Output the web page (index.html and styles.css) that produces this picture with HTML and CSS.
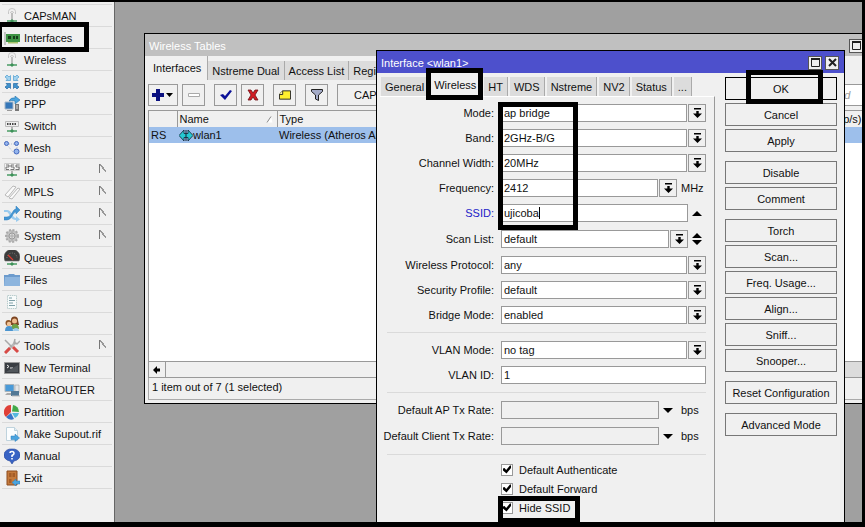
FILE: index.html
```html
<!DOCTYPE html>
<html lang="en">
<head>
<meta charset="utf-8">
<title>Wireless Tables</title>
<link rel="stylesheet" href="styles.css">
</head>
<body>
<svg class="defs" aria-hidden="true">
  <symbol id="drop" viewBox="0 0 9 10"><path d="M1 0h7v1.5H1zM3.300 3h2.400v2.500H9L4.500 10 0 5.500h3.300z"/></symbol>
  <symbol id="antenna" viewBox="0 0 16 16"><g fill="none" stroke="#bbb" stroke-width=".8"><path d="M4.500 6V3.500a3.500 3 0 0 1 7 0V6M6.500 5a1.500 1.500 0 0 1 3 0"/></g><path d="M7.500 5h1v7h-1z" fill="#888"/><path d="M3 13h10" stroke="#4a9c64" stroke-width="1.500"/><path d="M6 13l2-2 2 2-2 2z" fill="#3d9158"/></symbol>
  <symbol id="max" viewBox="0 0 9 9"><path d="M.5 1h8v7.500h-8zM0 1h9" fill="none" stroke="#222"/><path d="M0 0h9v2H0z" fill="#222"/></symbol>
</svg>
<main class="desktop">
  <nav class="menu">
    <a href="#"><svg viewBox="0 0 16 16"><use href="#antenna"/></svg>CAPsMAN</a>
    <a href="#" class="marked"><svg viewBox="0 0 16 16"><path d="M1 2v13" stroke="#999"/><path d="M2 4h14v8H2z" fill="#3f9445"/><path d="M4 6h3v3H4zM9 6h2v3H9zM12 6h2v3h-2z" fill="#163d1a"/><path d="M4 12h10v1.500H4z" fill="#a8c46b"/></svg>Interfaces</a>
    <a href="#"><svg viewBox="0 0 16 16"><use href="#antenna"/></svg>Wireless</a>
    <a href="#"><svg viewBox="0 0 16 16"><g fill="#a3d3f0" stroke="#4c9cce" stroke-width=".7"><path d="M1 3l2-2 2 2 1.500-1.500v5H2L3.500 5z"/><path d="M15 3l-2-2-2 2-1.500-1.500v5H14L12.500 5z"/></g><g fill="#3f91cc" stroke="#2469a3" stroke-width=".7"><path d="M1 13l2 2 2-2 1.500 1.500v-5H2L3.500 11z"/><path d="M15 13l-2 2-2-2-1.500 1.500v-5H14L12.500 11z"/></g></svg>Bridge</a>
    <a href="#"><svg viewBox="0 0 16 16"><path d="M1 6h8v7H1z" fill="#3577b9" stroke="#a5b7c8"/><path d="M3 14h5v1H3z" fill="#999"/><path d="M11 8h4v7h-4z" fill="#777"/><path d="M12 10h2M12 12h2" stroke="#ddd"/><path d="M5 5q2-4 6-3V0l5 4-5 4V5q-4-1-6 0z" fill="#4aa4df" stroke="#2872aa" stroke-width=".6"/></svg>PPP</a>
    <a href="#"><svg viewBox="0 0 16 16"><path d="M1.500 3.500h13v5h-13z" fill="#eee" stroke="#bbb"/><path d="M3 6h10" stroke="#444" stroke-width="2" stroke-dasharray="1.500 1"/><path d="M8 9v4" stroke="#777"/><path d="M3 13h10" stroke="#4a9c64" stroke-width="1.500"/><path d="M6 13l2-2 2 2-2 2z" fill="#3d9158"/></svg>Switch</a>
    <a href="#"><svg viewBox="0 0 16 16"><path d="M5 4h6M13 7v4M9 12L4 6" stroke="#b7bfd0" stroke-dasharray="1 1"/><g fill="#93b4ec" stroke="#4266bd"><circle cx="2.500" cy="3.500" r="2"/><circle cx="12.500" cy="3.500" r="2"/><circle cx="12.500" cy="11.500" r="2.500"/></g></svg>Mesh</a>
    <a href="#" class="more"><svg viewBox="0 0 16 16"><path d="M.5 1.500h15v7H.5z" fill="#f4f4f4" stroke="#ccc"/><path d="M2 3h3v2H2v2.500h3M10 3H7v2h3v2.500H6.500M15 3h-3v2h3v2.500h-3.500" fill="none" stroke="#555" stroke-width=".8"/><path d="M8 9v4" stroke="#777"/><path d="M3 13h10" stroke="#4a9c64" stroke-width="1.500"/><path d="M6 13l2-2 2 2-2 2z" fill="#3d9158"/></svg>IP</a>
    <a href="#" class="more"><svg viewBox="0 0 16 16"><g fill="#fafafa" stroke="#b9b9b9"><path d="M1 11L9 2l3 1-8 10z"/><path d="M5 14l9-10 2 1-8 10z"/></g></svg>MPLS</a>
    <a href="#" class="more"><svg viewBox="0 0 16 16"><path d="M0 4h3q3 0 5 4t4 4v-2l4 3.500-4 2.500v-2q-4 0-6-4T3 6H0z" fill="#9acbee"/><path d="M0 11h3q3 0 5-4t4-4V0l4 4-4 4V6q-2 0-4 4t-5 4H0z" fill="#4496d3" stroke="#2d7fbd" stroke-width=".5"/></svg>Routing</a>
    <a href="#" class="more"><svg viewBox="0 0 16 16"><circle cx="8" cy="8" r="6" fill="#c3c3c3" stroke="#aaa" stroke-width="2" stroke-dasharray="2 1.500"/><circle cx="8" cy="8" r="3" fill="#ddd" stroke="#999"/><path d="M8 3v10M3 8h10" stroke="#aaa"/></svg>System</a>
    <a href="#"><svg viewBox="0 0 16 16"><path d="M1 11a8 8 0 1 1 14 0z" fill="#3c3c3c" stroke="#777" stroke-width=".6"/><path d="M3 8a5 5 0 0 1 10 0" fill="none" stroke="#888" stroke-dasharray="1 1.500"/><path d="M4 5l5 5" stroke="#dc3b31" stroke-width="1.300"/><path d="M3 14h10" stroke="#4a9c64" stroke-width="1.500"/><path d="M6 14l2-2 2 2-2 2z" fill="#3d9158"/></svg>Queues</a>
    <a href="#"><svg viewBox="0 0 16 16"><path d="M0 3h4l1-1h5l1 1h5v11H0z" fill="#6c9bcd"/><path d="M1 5h15v9H0z" fill="#8db5de"/></svg>Files</a>
    <a href="#"><svg viewBox="0 0 16 16"><path d="M3.500 1.500h9v13h-9z" fill="#f8fbfb" stroke="#b8cccc" stroke-dasharray="1.500 .7"/><path d="M5 4h3M5 6.500h6M5 9h4M5 11.500h6" stroke="#7fa0a8"/></svg>Log</a>
    <a href="#"><svg viewBox="0 0 16 16"><path d="M7 4a3.500 3.500 0 0 1 7 0l1 5H7z" fill="#7b4320"/><circle cx="10.500" cy="5" r="2.500" fill="#efbd8f"/><path d="M7 13q0-5 4-5t4 5z" fill="#6da346"/><circle cx="4.500" cy="7" r="3" fill="#8e5629"/><circle cx="5" cy="8" r="2.200" fill="#f2c497"/><path d="M1 15q0-5 4-5t4 5z" fill="#4a94cf"/><path d="M9 15q0-3 3-3t3 3z" fill="#9fcdec"/></svg>Radius</a>
    <a href="#" class="more"><svg viewBox="0 0 16 16"><path d="M2 14L12 4" stroke="#b9b9b9" stroke-width="2.500"/><path d="M11 1l-1 4 3 1 3-3M1 2l7 7" fill="none" stroke="#a9a9a9" stroke-width="1.500"/><path d="M1 15l5-5M9 9l5 5" stroke="#d84a46" stroke-width="3"/></svg>Tools</a>
    <a href="#"><svg viewBox="0 0 16 16"><path d="M.5 2.500h15v11H.5z" fill="#393d42" stroke="#999"/><path d="M3 5l2 1.500L3 8M6 8h3" fill="none" stroke="#eee"/><path d="M2 12L14 5v7z" fill="#51565b"/></svg>New Terminal</a>
    <a href="#"><svg viewBox="0 0 16 16"><path d="M1 2.500h9v7H1z" fill="#4a9ad8" stroke="#a9b4bd"/><path d="M3 11h6v2H1z" fill="#aaa"/><path d="M11 3h4v8h-4z" fill="#e4e6e8" stroke="#aaa" stroke-width=".7"/><path d="M7 9h8v5H7z" fill="#527895"/><path d="M8 14h8" stroke="#bbb"/></svg>MetaROUTER</a>
    <a href="#"><svg viewBox="0 0 16 16"><path d="M7 8V1a7 7 0 0 0-5 12z" fill="#df4038"/><path d="M8 7.500L9 1a7 7 0 0 1 6 7z" fill="#43aa4a"/><path d="M8 9h7a7 7 0 0 1-4 5z" fill="#57b8df"/><path d="M7 9l3 6a7 7 0 0 1-8-2z" fill="#3976c8"/></svg>Partition</a>
    <a href="#"><svg viewBox="0 0 16 16"><path d="M2.500 1.500h8l3 3v10h-11z" fill="#fbfdfe" stroke="#bfd3dd"/><path d="M10.500 1.500v3h3" fill="#e3eef4" stroke="#bfd3dd"/><path d="M7 10h4V8l4.500 4L11 15.500V13.500H7z" fill="#4aa4df" stroke="#2c7dbb" stroke-width=".5"/></svg>Make Supout.rif</a>
    <a href="#"><svg viewBox="0 0 16 16"><path d="M8 1a7 6 0 0 1 2 12l-2 3-2-3A7 6 0 0 1 8 1z" fill="#3863c4" stroke="#274698" stroke-width=".6"/><path d="M6 5q0-1.500 2-1.500T10 5.500q0 1-2 2V9" fill="none" stroke="#fff" stroke-width="1.500"/><path d="M7.200 10h1.600v1.500H7.200z" fill="#fff"/></svg>Manual</a>
    <a href="#"><svg viewBox="0 0 16 16"><path d="M3 1h10v14H3z" fill="#c47a3c" stroke="#8d4d1f"/><path d="M5 3h2.500v4H5zM8.500 3H11v4H8.500zM5 9h2.500v4H5z" fill="#a55d28"/><path d="M16 11h-4V9l-4 3.500 4 3.500v-2h4z" fill="#4aa4df" stroke="#2c7dbb" stroke-width=".5"/></svg>Exit</a>
  </nav>

  <section class="window tables">
    <header class="titlebar"><span>Wireless Tables</span><button type="button" class="winbtn" aria-label="Maximize"><svg viewBox="0 0 9 9"><use href="#max"/></svg></button><button type="button" class="winbtn" aria-label="Close"><svg viewBox="0 0 9 9"><path d="M1 1l7 7M8 1L1 8" stroke="#222" stroke-width="2"/></svg></button></header>
    <div class="tabs">
      <button type="button" class="tab active">Interfaces</button><button type="button" class="tab">Nstreme Dual</button><button type="button" class="tab">Access List</button><button type="button" class="tab">Registration</button>
    </div>
    <div class="toolbar">
      <button type="button" class="tool wide" aria-label="Add"><svg viewBox="0 0 22 12"><path d="M4 0h4v4h4v4H8v4H4V8H0V4h4z" fill="#0b1180"/><path d="M14 4h7l-3.500 4z"/></svg></button>
      <button type="button" class="tool" aria-label="Remove"><svg viewBox="0 0 12 12"><path d="M.5 4.500h11v3H.5z" fill="#fff" stroke="#aaa"/></svg></button>
      <button type="button" class="tool spaced" aria-label="Enable"><svg viewBox="0 0 12 12"><path d="M0 6l3-1 2 2 5-6 2 1-7 9z" fill="#0b1198"/></svg></button>
      <button type="button" class="tool" aria-label="Disable"><svg viewBox="0 0 12 12"><path d="M1 1h3l2 3 2-3h3L8 6l3 5H8L6 8l-2 3H1l3-5z" fill="#d21c24" stroke="#701015" stroke-width=".8"/></svg></button>
      <button type="button" class="tool spaced" aria-label="Comment"><svg viewBox="0 0 13 12"><path d="M4 1.500h8.500v9H.5V5z" fill="#ffef2e" stroke="#222"/><path d="M.5 5.500H4v-4" fill="#fff7a0" stroke="#222"/></svg></button>
      <button type="button" class="tool spaced" aria-label="Filter"><svg viewBox="0 0 12 12"><path d="M.5.500h11v2L7.500 6v5.500l-3-1.500V6l-4-3.500z" fill="#a5acc9" stroke="#222"/></svg></button>
      <button type="button" class="tool caps spaced">CAP</button>
      <input class="find" type="search" placeholder="Find" aria-label="Find">
    </div>
    <div class="grid">
      <table>
        <thead><tr><th class="flag"></th><th class="name">Name<svg viewBox="0 0 7 7"><path d="M.5 6.500h6L5 1z" fill="#fff"/><path d="M1 6.500L5 .5" stroke="#888"/></svg></th><th>Type</th><th class="rate">Rx (p/s)</th></tr></thead>
        <tbody><tr><td>RS</td><td><span class="iface"><svg viewBox="0 0 14 11"><path d="M0 5.500L5 0v3.500h4V0l5 5.500L9 11V7.500H5V11z" fill="#26c9d2" stroke="#123" stroke-width=".8"/><path d="M7 0v11" stroke="#123"/></svg>wlan1</span></td><td>Wireless (Atheros AR9300)</td><td></td></tr></tbody>
      </table>
    </div>
    <div class="scroll"><button type="button" aria-label="Scroll left"><svg viewBox="0 0 8 8"><path d="M0 4l4-4v2.500h3v3H4V8z"/></svg></button><span class="thumb"></span></div>
    <footer class="status">1 item out of 7 (1 selected)</footer>
  </section>

  <section class="window dialog">
    <header class="titlebar"><span>Interface &lt;wlan1&gt;</span><button type="button" class="winbtn" aria-label="Maximize"><svg viewBox="0 0 9 9"><use href="#max"/></svg></button><button type="button" class="winbtn" aria-label="Close"><svg viewBox="0 0 9 9"><path d="M1 1l7 7M8 1L1 8" stroke="#222" stroke-width="2"/></svg></button></header>
    <div class="body">
      <div class="pane">
        <div class="tabs">
          <button type="button" class="tab">General</button><button type="button" class="tab active marked">Wireless</button><button type="button" class="tab">HT</button><button type="button" class="tab">WDS</button><button type="button" class="tab">Nstreme</button><button type="button" class="tab">NV2</button><button type="button" class="tab">Status</button><button type="button" class="tab">...</button>
        </div>
        <form class="form">
          <div class="row"><label for="mode">Mode:</label><select id="mode"><option>ap bridge</option></select><button type="button" class="drop" aria-label="Open mode"><svg><use href="#drop"/></svg></button></div>
          <div class="row"><label for="band">Band:</label><select id="band"><option>2GHz-B/G</option></select><button type="button" class="drop" aria-label="Open band"><svg><use href="#drop"/></svg></button></div>
          <div class="row"><label for="width">Channel Width:</label><select id="width"><option>20MHz</option></select><button type="button" class="drop" aria-label="Open channel width"><svg><use href="#drop"/></svg></button></div>
          <div class="row"><label for="freq">Frequency:</label><input id="freq" type="text" value="2412"><button type="button" class="drop" aria-label="Open frequency"><svg><use href="#drop"/></svg></button><span class="unit">MHz</span></div>
          <div class="row"><label for="ssid" class="changed">SSID:</label><span class="editing"><input id="ssid" type="text" value="ujicoba"><i class="caret"></i></span><button type="button" class="marker" aria-label="Collapse"><svg viewBox="0 0 10 12"><path d="M0 9l5-5 5 5z"/></svg></button></div>
          <div class="row tall"><label for="scan">Scan List:</label><input id="scan" type="text" value="default"><button type="button" class="drop" aria-label="Open scan list"><svg><use href="#drop"/></svg></button><button type="button" class="marker" aria-label="Add or remove"><svg viewBox="0 0 10 12"><path d="M0 5l5-5 5 5zM0 7h10l-5 5z"/></svg></button></div>
          <div class="row"><label for="proto">Wireless Protocol:</label><select id="proto"><option>any</option></select><button type="button" class="drop" aria-label="Open protocol"><svg><use href="#drop"/></svg></button></div>
          <div class="row"><label for="sec">Security Profile:</label><select id="sec"><option>default</option></select><button type="button" class="drop" aria-label="Open security profile"><svg><use href="#drop"/></svg></button></div>
          <div class="row"><label for="bmode">Bridge Mode:</label><select id="bmode"><option>enabled</option></select><button type="button" class="drop" aria-label="Open bridge mode"><svg><use href="#drop"/></svg></button></div>
          <hr>
          <div class="row"><label for="vmode">VLAN Mode:</label><select id="vmode"><option>no tag</option></select><button type="button" class="drop" aria-label="Open VLAN mode"><svg><use href="#drop"/></svg></button></div>
          <div class="row"><label for="vid">VLAN ID:</label><input id="vid" type="text" value="1"></div>
          <hr>
          <div class="row"><label for="aprate">Default AP Tx Rate:</label><input id="aprate" type="text" class="empty"><button type="button" class="marker" aria-label="Expand"><svg viewBox="0 0 10 12"><path d="M0 4h10L5 9z"/></svg></button><span class="unit">bps</span></div>
          <div class="row tall"><label for="clrate">Default Client Tx Rate:</label><input id="clrate" type="text" class="empty"><button type="button" class="marker" aria-label="Expand"><svg viewBox="0 0 10 12"><path d="M0 4h10L5 9z"/></svg></button><span class="unit">bps</span></div>
          <hr>
          <div class="checks">
            <label><input type="checkbox" checked>Default Authenticate</label>
            <label><input type="checkbox" checked>Default Forward</label>
            <label class="marked"><input type="checkbox" checked>Hide SSID</label>
          </div>
          <span class="fields-mark"></span>
        </form>
      </div>
      <div class="actions">
        <div><button type="button" class="primary marked">OK</button><button type="button">Cancel</button><button type="button">Apply</button></div>
        <div><button type="button">Disable</button><button type="button">Comment</button></div>
        <div><button type="button">Torch</button><button type="button">Scan...</button><button type="button">Freq. Usage...</button><button type="button">Align...</button><button type="button">Sniff...</button><button type="button">Snooper...</button></div>
        <div><button type="button">Reset Configuration</button></div>
        <div><button type="button">Advanced Mode</button></div>
      </div>
    </div>
  </section>
</main>
</body>
</html>
```
FILE: styles.css
```css
* { box-sizing: border-box; }
body {
  margin: 0;
  height: 100vh;
  padding: 2px 3px 5px 0;
  display: flex;
  background: #000;
  color: #111;
  font: 11px/14px "Liberation Sans", Arial, sans-serif;
}
button, input, select { font: inherit; color: inherit; margin: 0; border-radius: 0; }
button { padding: 0; }
.defs { position: absolute; width: 0; height: 0; }

.desktop {
  position: relative;
  flex: 1;
  overflow: hidden;
  display: flex;
  background: #a0a0a0;
}

/* Side menu */
.menu {
  flex: none;
  width: 115px;
  padding: 2px 2px 0;
  background: #f0f0f0;
  border-right: 1px solid #666;
}
.menu a {
  position: relative;
  display: flex;
  align-items: center;
  gap: 4px;
  height: 22px;
  padding-left: 2px;
  border-top: 1px solid #dadada;
  color: inherit;
  text-decoration: none;
}
.menu a:last-child { box-shadow: 0 1px #dadada; }
.menu svg { width: 16px; height: 16px; }
.menu .more::after {
  content: "";
  width: 6px;
  height: 9px;
  margin: 0 6px 3px auto;
  background: linear-gradient(50deg, #f0f0f0 45%, #999 46%, #999 60%, transparent 61%);
  border-left: 1px solid #777;
}

/* Thick frames round the steps to follow */
.marked { position: relative; z-index: 1; }
.marked::before, .fields-mark {
  content: "";
  position: absolute;
  border: 5px solid #000;
  pointer-events: none;
}
.menu .marked::before { inset: -5px 23px -4px -5px; }
.tab.marked::before { inset: -9px -2px -4px -3px; }
.actions .marked::before { inset: -8px 13px -5px 20px; }
.checks .marked::before { inset: -2px 126px -6px -3px; }
.fields-mark { left: 118px; top: 5px; width: 80px; height: 128px; }

/* Windows */
.window {
  position: absolute;
  display: flex;
  flex-direction: column;
  border: 1px solid #000;
  background: #f0f0f0;
}
.titlebar {
  flex: none;
  display: flex;
  align-items: center;
  gap: 3px;
  height: 22px;
  padding: 1px 5px 0 4px;
  color: #fff;
}
.titlebar span { flex: 1; }
.winbtn {
  display: flex;
  align-items: center;
  justify-content: center;
  width: 14px;
  height: 14px;
  background: #f0f0f0;
  border: 1px solid #555;
}
.winbtn svg { width: 9px; height: 9px; }

.tabs { display: flex; align-items: flex-end; flex: none; }
.tab {
  height: 19px;
  padding: 0 4px;
  background: #dcdcdc;
  border: 0;
  border-right: 1px solid #aaa;
}
.tab.active { background: #f0f0f0; }

.tables { left: 144px; top: 31px; right: -25px; height: 371px; }
.tables .titlebar { padding-right: 6px; background: #c0c0c0; }
.tables .tabs { height: 24px; padding-left: 2px; }
.tables .tab.active { height: 24px; padding: 0 6px; }
.toolbar { display: flex; gap: 4px; padding: 4px 3px; }
.tool {
  display: flex;
  align-items: center;
  justify-content: center;
  width: 23px;
  height: 22px;
  background: #f0f0f0;
  border: 1px solid #999;
}
.tool svg { width: 12px; height: 12px; }
.tool.wide { width: 30px; }
.tool.wide svg { width: 22px; }
.tool.spaced { margin-left: 5px; }
.tool.caps { width: 80px; justify-content: flex-start; padding-left: 16px; }
.find { width: 57px; margin-left: auto; border: 1px solid #999; background: #fff; font-style: italic; }
.find::placeholder { color: #999; }

.grid {
  flex: 1;
  margin-left: 3px;
  background: #fff;
  border: 1px solid #999;
  border-bottom: 0;
}
table { width: 100%; border-collapse: collapse; table-layout: fixed; }
th {
  height: 16px;
  padding: 0 2px;
  background: #f0f0f0;
  border-right: 1px solid #999;
  text-align: left;
  font-weight: normal;
}
th.flag { width: 28px; }
th.name { width: 100px; }
th.rate { width: 64px; }
th svg { float: right; width: 7px; height: 7px; margin: 4px 2px; }
td { height: 16px; padding: 0 2px; background: #9dbfeb; white-space: nowrap; }
.iface { display: flex; align-items: center; }
.iface svg { width: 14px; height: 11px; }
.scroll {
  display: flex;
  height: 17px;
  margin-left: 3px;
  border: 1px solid #999;
}
.scroll button {
  width: 17px;
  background: #f0f0f0;
  border: 0;
  border-right: 1px solid #999;
}
.scroll svg { display: block; width: 8px; height: 8px; margin: auto; }
.scroll .thumb { width: 60px; margin-left: auto; background: #dcdcdc; }
.status {
  height: 22px;
  margin: 0 3px 3px;
  padding: 2px 3px;
  border-left: 1px solid #aaa;
  border-bottom: 1px solid #aaa;
}

/* Interface dialog */
.dialog { left: 376px; top: 48px; right: 17px; bottom: -12px; }
.dialog .titlebar { background: #4d50cc; }
.body { flex: 1; display: flex; min-height: 0; gap: 10px; padding: 4px 7px 0 3px; }
.pane { flex: 1; display: flex; flex-direction: column; }
.dialog .tabs { gap: 2px; padding-left: 1px; }
.dialog .tab.active { margin-left: -2px; padding: 0 5px 3px; }
.form {
  position: relative;
  flex: 1;
  display: flex;
  flex-direction: column;
  gap: 7px;
  padding: 7px 8px 0 0;
  border-top: 1px solid #fff;
  border-right: 1px solid #999;
}
.row { display: flex; align-items: center; height: 18px; }
.row.tall { height: 20px; }
.row label { width: 114px; margin-right: 7px; text-align: right; white-space: nowrap; }
.row .changed { color: #2222c8; }
.row input, .row select {
  flex: 1;
  min-width: 0;
  width: 100%;
  height: 18px;
  padding: 0 2px;
  appearance: none;
  background: #fff;
  border: 1px solid #999;
}
.row .empty { background: #f0f0f0; }
.editing { position: relative; flex: 1; display: flex; }
.caret { position: absolute; left: 38px; top: 3px; width: 1px; height: 12px; background: #000; }
.drop {
  display: flex;
  align-items: center;
  justify-content: center;
  width: 18px;
  height: 18px;
  margin-left: 1px;
  background: #f0f0f0;
  border: 1px solid #999;
}
.drop svg { width: 9px; height: 10px; }
.marker {
  display: flex;
  align-items: center;
  justify-content: center;
  width: 18px;
  height: 18px;
  background: none;
  border: 0;
}
.marker svg { width: 10px; height: 12px; }
.unit { width: 29px; padding-left: 4px; }
hr { width: calc(100% - 7px); margin: 1px 0 1px 7px; border: 0; border-top: 1px solid #dadada; }
.checks { margin: -3px 0 0 121px; }
.checks label { display: flex; align-items: center; gap: 6px; height: 19px; }
.checks input {
  appearance: none;
  width: 12px;
  height: 12px;
  background: #fff;
  border: 1px solid #999;
}
.checks input:checked::after {
  content: "";
  display: block;
  height: 10px;
  background: #000;
  clip-path: polygon(10% 40%, 25% 35%, 42% 55%, 80% 10%, 90% 10%, 90% 35%, 45% 90%, 10% 60%);
}

.actions { display: flex; flex-direction: column; gap: 9px; width: 112px; }
.actions div { display: flex; flex-direction: column; gap: 3px; }
.actions button {
  height: 23px;
  background: #f0f0f0;
  border: 1px solid #777;
}
.actions .primary { border-color: #000; }
```
